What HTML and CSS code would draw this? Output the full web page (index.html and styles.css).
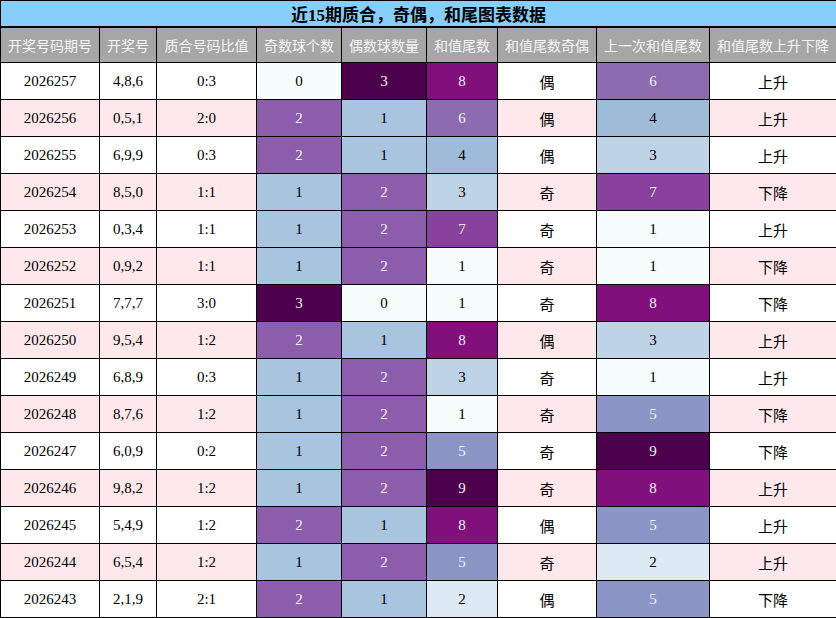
FILE: index.html
```html
<!DOCTYPE html>
<html lang="zh">
<head>
<meta charset="utf-8">
<link rel="stylesheet" href="styles.css">
</head>
<body>
<table class="tbl">
<colgroup>
<col class="w1"><col class="w2"><col class="w3"><col class="w4"><col class="w5"><col class="w6"><col class="w7"><col class="w8"><col class="w9">
</colgroup>
<thead>
<tr class="title"><th colspan="9">近15期质合，奇偶，和尾图表数据</th></tr>
<tr class="head"><th>开奖号码期号</th><th>开奖号</th><th>质合号码比值</th><th>奇数球个数</th><th>偶数球数量</th><th>和值尾数</th><th>和值尾数奇偶</th><th>上一次和值尾数</th><th>和值尾数上升下降</th></tr>
</thead>
<tbody>
<tr><td>2026257</td><td>4,8,6</td><td>0:3</td><td class="q0">0</td><td class="q3">3</td><td class="t8">8</td><td class="zh">偶</td><td class="t6">6</td><td class="zh">上升</td></tr>
<tr class="pk"><td>2026256</td><td>0,5,1</td><td>2:0</td><td class="q2">2</td><td class="q1">1</td><td class="t6">6</td><td class="zh">偶</td><td class="t4">4</td><td class="zh">上升</td></tr>
<tr><td>2026255</td><td>6,9,9</td><td>0:3</td><td class="q2">2</td><td class="q1">1</td><td class="t4">4</td><td class="zh">偶</td><td class="t3">3</td><td class="zh">上升</td></tr>
<tr class="pk"><td>2026254</td><td>8,5,0</td><td>1:1</td><td class="q1">1</td><td class="q2">2</td><td class="t3">3</td><td class="zh">奇</td><td class="t7">7</td><td class="zh">下降</td></tr>
<tr><td>2026253</td><td>0,3,4</td><td>1:1</td><td class="q1">1</td><td class="q2">2</td><td class="t7">7</td><td class="zh">奇</td><td class="t1">1</td><td class="zh">上升</td></tr>
<tr class="pk"><td>2026252</td><td>0,9,2</td><td>1:1</td><td class="q1">1</td><td class="q2">2</td><td class="t1">1</td><td class="zh">奇</td><td class="t1">1</td><td class="zh">下降</td></tr>
<tr><td>2026251</td><td>7,7,7</td><td>3:0</td><td class="q3">3</td><td class="q0">0</td><td class="t1">1</td><td class="zh">奇</td><td class="t8">8</td><td class="zh">下降</td></tr>
<tr class="pk"><td>2026250</td><td>9,5,4</td><td>1:2</td><td class="q2">2</td><td class="q1">1</td><td class="t8">8</td><td class="zh">偶</td><td class="t3">3</td><td class="zh">上升</td></tr>
<tr><td>2026249</td><td>6,8,9</td><td>0:3</td><td class="q1">1</td><td class="q2">2</td><td class="t3">3</td><td class="zh">奇</td><td class="t1">1</td><td class="zh">上升</td></tr>
<tr class="pk"><td>2026248</td><td>8,7,6</td><td>1:2</td><td class="q1">1</td><td class="q2">2</td><td class="t1">1</td><td class="zh">奇</td><td class="t5">5</td><td class="zh">下降</td></tr>
<tr><td>2026247</td><td>6,0,9</td><td>0:2</td><td class="q1">1</td><td class="q2">2</td><td class="t5">5</td><td class="zh">奇</td><td class="t9">9</td><td class="zh">下降</td></tr>
<tr class="pk"><td>2026246</td><td>9,8,2</td><td>1:2</td><td class="q1">1</td><td class="q2">2</td><td class="t9">9</td><td class="zh">奇</td><td class="t8">8</td><td class="zh">上升</td></tr>
<tr><td>2026245</td><td>5,4,9</td><td>1:2</td><td class="q2">2</td><td class="q1">1</td><td class="t8">8</td><td class="zh">偶</td><td class="t5">5</td><td class="zh">上升</td></tr>
<tr class="pk"><td>2026244</td><td>6,5,4</td><td>1:2</td><td class="q1">1</td><td class="q2">2</td><td class="t5">5</td><td class="zh">奇</td><td class="t2">2</td><td class="zh">上升</td></tr>
<tr><td>2026243</td><td>2,1,9</td><td>2:1</td><td class="q2">2</td><td class="q1">1</td><td class="t2">2</td><td class="zh">偶</td><td class="t5">5</td><td class="zh">下降</td></tr>
</tbody>
</table>
</body>
</html>
```
FILE: styles.css
```css
html, body {
  margin: 0;
  padding: 0;
  background: #ffffff;
}
.tbl {
  border-collapse: collapse;
  table-layout: fixed;
  width: 836px;
  font-family: "Liberation Serif", "Noto Sans CJK SC", serif;
  font-size: 15px;
  color: #000;
}
.w1 { width: 99px; }
.w2 { width: 57px; }
.w3 { width: 100px; }
.w4 { width: 85px; }
.w5 { width: 85px; }
.w6 { width: 71px; }
.w7 { width: 99px; }
.w8 { width: 113px; }
.w9 { width: 127px; }
.tbl th, .tbl td {
  border: 1px solid #000;
  text-align: center;
  vertical-align: middle;
  padding: 0;
  overflow: hidden;
  white-space: nowrap;
}
.title th {
  background: #87cefa;
  height: 23px;
  font-size: 17px;
  font-weight: bold;
  border-bottom: 2px solid #000;
  font-family: "Liberation Serif", "Noto Sans CJK SC", serif;
}
.head th {
  background: #a6a6a6;
  color: #f4f4f4;
  font-weight: normal;
  height: 34px;
  font-size: 14px;
  font-family: "Noto Sans CJK SC", sans-serif;
}
.tbl td {
  height: 36px;
  background: #ffffff;
}
.tbl tr.pk td {
  background: #ffe8ec;
}
.tbl td.zh {
  font-family: "Noto Sans CJK SC", sans-serif;
  font-size: 15px;
}
.tbl tr td.q0 { background: #f7fcfd; }
.tbl tr td.q1 { background: #a9c4de; }
.tbl tr td.q2 { background: #8b5daa; color: #f1f1f1; }
.tbl tr td.q3 { background: #4d004b; color: #f1f1f1; }
.tbl tr td.t1 { background: #f7fcfd; }
.tbl tr td.t2 { background: #deeaf3; }
.tbl tr td.t3 { background: #bfd3e6; }
.tbl tr td.t4 { background: #9ebcda; }
.tbl tr td.t5 { background: #8c96c6; color: #f1f1f1; }
.tbl tr td.t6 { background: #8c6bb1; color: #f1f1f1; }
.tbl tr td.t7 { background: #88419d; color: #f1f1f1; }
.tbl tr td.t8 { background: #810f7c; color: #f1f1f1; }
.tbl tr td.t9 { background: #4d004b; color: #f1f1f1; }
```
